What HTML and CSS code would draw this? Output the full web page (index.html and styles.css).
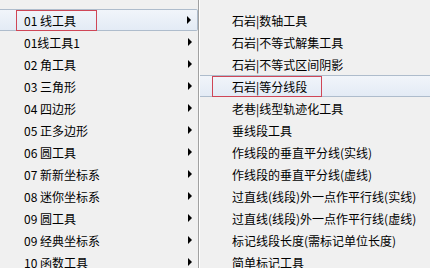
FILE: index.html
```html
<!DOCTYPE html>
<html lang="zh-CN">
<head>
  <meta charset="UTF-8" />
  <title>线工具菜单</title>
  <link rel="stylesheet" href="styles.css">
</head>
<body>
  <div class="menus">
    <div class="menu main-menu">
      <div class="item hover"><span class="mark mark-main">01 线工具</span><i class="arrow"></i></div>
      <div class="item">01线工具1<i class="arrow"></i></div>
      <div class="item">02 角工具<i class="arrow"></i></div>
      <div class="item">03 三角形<i class="arrow"></i></div>
      <div class="item">04 四边形<i class="arrow"></i></div>
      <div class="item">05 正多边形<i class="arrow"></i></div>
      <div class="item">06 圆工具<i class="arrow"></i></div>
      <div class="item">07 新新坐标系<i class="arrow"></i></div>
      <div class="item">08 迷你坐标系<i class="arrow"></i></div>
      <div class="item">09 圆工具<i class="arrow"></i></div>
      <div class="item">09 经典坐标系<i class="arrow"></i></div>
      <div class="item">10 函数工具<i class="arrow"></i></div>
    </div>

    <div class="menu sub-menu">
      <div class="item">石岩|数轴工具</div>
      <div class="item">石岩|不等式解集工具</div>
      <div class="item">石岩|不等式区间阴影</div>
      <div class="item hover"><span class="mark mark-sub">石岩|等分线段</span></div>
      <div class="item">老巷|线型轨迹化工具</div>
      <div class="item">垂线段工具</div>
      <div class="item">作线段的垂直平分线(实线)</div>
      <div class="item">作线段的垂直平分线(虚线)</div>
      <div class="item">过直线(线段)外一点作平行线(实线)</div>
      <div class="item">过直线(线段)外一点作平行线(虚线)</div>
      <div class="item">标记线段长度(需标记单位长度)</div>
      <div class="item">简单标记工具</div>
    </div>
  </div>
</body>
</html>
```

FILE: styles.css
```css
body {
  margin: 0;
  background: #f0f0f0;
  font-family: "Noto Sans CJK SC", "Liberation Sans", sans-serif;
  font-size: 12px;
  color: #000;
  overflow: hidden;
}

.menus {
  display: flex;
  height: 268px;
}

.menu {
  padding-top: 9px;
  background: #f0f0f0;
}

.main-menu {
  width: 198px;
}

.sub-menu {
  flex: 1;
  border-left: 1px solid #a0a0a0;
  box-shadow: inset 1px 0 0 #fff;
  padding-left: 1px;
}

.item {
  display: flex;
  align-items: center;
  height: 22px;
  box-sizing: border-box;
  white-space: nowrap;
}

.main-menu .item {
  padding-left: 24px;
  padding-right: 6px;
}

.sub-menu .item {
  padding-left: 32px;
}

.item.hover {
  background: linear-gradient(#f1f5fa, #e3ebf5);
  border-top: 1px solid #aebccc;
  border-bottom: 1px solid #aebccc;
}

.main-menu .item.hover {
  border-right: 1px solid #aebccc;
  border-radius: 0 2px 2px 0;
}

.arrow {
  margin-left: auto;
  width: 0;
  height: 0;
  border-left: 4px solid #000;
  border-top: 4px solid transparent;
  border-bottom: 4px solid transparent;
}

.mark {
  display: inline-block;
  height: 21px;
  line-height: 19px;
  box-sizing: border-box;
  border: 1px solid #cf4656;
}

.mark-main {
  width: 81px;
  margin-left: -8px;
  padding-left: 7px;
}

.mark-sub {
  width: 110px;
  margin-left: -20px;
  padding-left: 19px;
}
```
